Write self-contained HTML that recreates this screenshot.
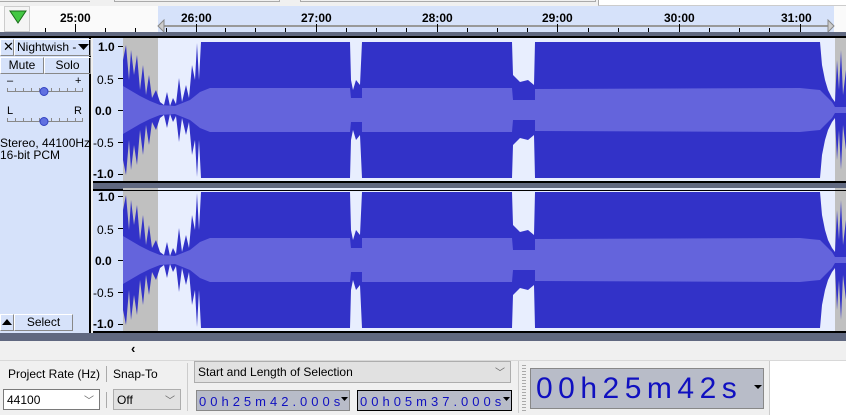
<!DOCTYPE html>
<html><head><meta charset="utf-8"><style>
*{margin:0;padding:0;box-sizing:border-box}
body{width:846px;height:415px;overflow:hidden;background:#f0f0f0;font-family:"Liberation Sans",Arial,sans-serif;font-size:12px;position:relative}
.a{position:absolute}
.lbl{position:absolute;font-size:12px;color:#000;white-space:nowrap}
.tb{position:absolute;height:21px;border:1px solid #7a7a7a;font-size:12px;padding:3px 0 0 3px}
.dig{position:absolute;height:21px;border:1px solid #888;background:#b8bcc8;font-family:"Liberation Sans",sans-serif;font-size:13px;color:#1010c0;letter-spacing:4px;padding:3px 0 0 2px;white-space:nowrap}
</style></head><body>
<div class="a" style="left:0;top:0;width:846px;height:7px;background:#f0f0f0"></div>
<div class="a" style="left:0;top:0;width:90px;height:2px;border-bottom:1px solid #aaa"></div>
<div class="a" style="left:114px;top:0;width:166px;height:2px;border:1px solid #aaa;border-top:0"></div>
<div class="a" style="left:300px;top:0;width:296px;height:2px;border:1px solid #aaa;border-top:0"></div>
<div class="a" style="left:598px;top:0;width:248px;height:6px;background:#fff;border-left:1px solid #aaa;border-bottom:1px solid #ccc"></div>
<div class="a" style="left:0;top:6px;width:158px;height:26px;background:#fafafa"></div>
<div class="a" style="left:4px;top:6px;width:26px;height:26px;border:1px solid #ccc;background:#f4f4f4"></div>
<svg class="a" style="left:9px;top:10px" width="18" height="14"><polygon points="1,1 17,1 9,13" fill="#44c844" stroke="#1a6a1a" stroke-width="1"/></svg>
<div class="a" style="left:158px;top:6px;width:676px;height:26px;background:#d6e2fa"></div>
<div class="a" style="left:834px;top:6px;width:12px;height:26px;background:#fafafa"></div>
<div class="a" style="left:163px;top:25px;width:668px;height:2px;background:#999"></div>
<svg class="a" style="left:157px;top:19px" width="680" height="14"><polygon points="1,7 7,1 7,13" fill="#ccc" stroke="#888"/><polygon points="677,7 671,1 671,13" fill="#ccc" stroke="#888"/></svg>
<svg class="a" style="left:0;top:24px" width="846" height="9">
<g stroke="#000" stroke-width="1">
<path d="M45.5 4v5M75.5 4v5M105.5 4v5M135.5 4v5M166.5 4v5M225.5 4v5M255.5 4v5M285.5 4v5M346.5 4v5M376.5 4v5M406.5 4v5M467.5 4v5M497.5 4v5M527.5 4v5M588.5 4v5M618.5 4v5M648.5 4v5M709.5 4v5M739.5 4v5M769.5 4v5"/>
<path d="M75.5 0v9M196.5 0v9M316.5 0v9M437.5 0v9M557.5 0v9M679.5 0v9M800.5 0v9"/></g></svg>
<div class="lbl" style="left:60px;top:11px;font-weight:bold">25:00</div>
<div class="lbl" style="left:181px;top:11px;font-weight:bold">26:00</div>
<div class="lbl" style="left:301px;top:11px;font-weight:bold">27:00</div>
<div class="lbl" style="left:422px;top:11px;font-weight:bold">28:00</div>
<div class="lbl" style="left:542px;top:11px;font-weight:bold">29:00</div>
<div class="lbl" style="left:664px;top:11px;font-weight:bold">30:00</div>
<div class="lbl" style="left:781px;top:11px;font-weight:bold">31:00</div>
<div class="a" style="left:0;top:32px;width:846px;height:4px;background:#606880"></div>
<div class="a" style="left:0;top:36px;width:846px;height:2px;background:#000"></div>
<div class="a" style="left:0;top:38px;width:91px;height:295px;background:#d6e2fa;border-right:2px solid #000"></div>
<div class="a" style="left:0;top:39px;width:14px;height:17px;border:1px solid #fff;border-right-color:#888;border-bottom-color:#888;font-size:13px;padding-left:2px;line-height:14px">✕</div>
<div class="a" style="left:14px;top:39px;width:77px;height:17px;border:1px solid #fff;border-right-color:#888;border-bottom-color:#888;font-size:12px;padding-left:2px;line-height:15px">Nightwish -</div>
<svg class="a" style="left:78px;top:44px" width="11" height="7"><polygon points="0,0 11,0 5.5,6" fill="#000"/></svg>
<div class="a" style="left:0;top:57px;width:44px;height:17px;border:1px solid #fff;border-right-color:#888;border-bottom-color:#888;text-align:center;line-height:15px">Mute</div>
<div class="a" style="left:44px;top:57px;width:47px;height:17px;border:1px solid #fff;border-right-color:#888;border-bottom-color:#888;text-align:center;line-height:15px">Solo</div>
<div class="lbl" style="left:7px;top:75px;font-size:11px">–</div>
<div class="lbl" style="left:75px;top:75px;font-size:11px">+</div>
<div class="lbl" style="left:7px;top:105px;font-size:11px">L</div>
<div class="lbl" style="left:74px;top:105px;font-size:11px">R</div>
<svg class="a" style="left:6px;top:85px" width="78" height="44">
<g stroke="#888"><path d="M1 6.5h76M1 36.5h76"/><path d="M1.5 3v3M9.5 3v3M17.5 3v3M25.5 3v3M33.5 3v3M45.5 3v3M53.5 3v3M61.5 3v3M69.5 3v3M76.5 3v3M1.5 33v3M9.5 33v3M17.5 33v3M25.5 33v3M33.5 33v3M45.5 33v3M53.5 33v3M61.5 33v3M69.5 33v3M76.5 33v3"/></g>
<circle cx="38" cy="6.5" r="4" fill="#6070e0" stroke="#3040c0"/><circle cx="38" cy="36.5" r="4" fill="#6070e0" stroke="#3040c0"/></svg>
<div class="lbl" style="left:0;top:137px;line-height:12px">Stereo, 44100Hz<br>16-bit PCM</div>
<div class="a" style="left:0;top:314px;width:14px;height:17px;border:1px solid #fff;border-right-color:#888;border-bottom-color:#888"></div>
<svg class="a" style="left:2px;top:319px" width="10" height="7"><polygon points="0,6 10,6 5,0" fill="#000"/></svg>
<div class="a" style="left:14px;top:314px;width:59px;height:17px;border:1px solid #fff;border-right-color:#888;border-bottom-color:#888;text-align:center;line-height:15px">Select</div>
<div class="a" style="left:93px;top:38px;width:30px;height:295px;background:#d6e2fa"></div>
<div class="a" style="left:93px;top:182px;width:753px;height:8px;background:#606880;border-top:1px solid #000;border-bottom:1px solid #000"></div>
<svg class="a" style="left:93px;top:38px" width="30" height="295" font-family="Liberation Sans" font-size="12" font-weight="bold">
<g stroke="#000"><path d="M25 8.5h5M25 40.5h5M25 72.5h5M25 104.5h5M25 136.5h5M25 158.5h5M25 190.5h5M25 222.5h5M25 254.5h5M25 286.5h5"/></g>
<text x="5" y="13">1.0</text><text x="4" y="46" font-weight="normal">0.5</text><text x="2" y="77">0.0</text><text x="0" y="109" font-weight="normal">-0.5</text><text x="0" y="140">-1.0</text>
<text x="5" y="163">1.0</text><text x="4" y="196" font-weight="normal">0.5</text><text x="2" y="227">0.0</text><text x="0" y="259" font-weight="normal">-0.5</text><text x="0" y="290">-1.0</text>
</svg>
<svg class="a" style="left:0;top:0" width="846" height="340">
<defs>
<g id="ch">
<rect x="123" y="-72" width="35" height="144" fill="#c0c0c0"/>
<rect x="158" y="-72" width="677" height="144" fill="#e8eefe"/>
<rect x="835" y="-72" width="11" height="144" fill="#c0c0c0"/>
<polygon fill="#3232c8" points="123,-50 126,-65 129,-30 131,-60 134,-35 137,-55 140,-20 143,-45 146,-15 149,-35 152,-12 156,-20 160,-8 164,-5 167,-18 170,-4 173,-12 176,-6 179,-32 182,-8 186,-25 189,-12 192,-45 195,-30 197,-67 199,-30 201,-68 350,-68 351,-30 353,-20 356,-30 360,-25 362,-68 512,-68 513,-35 520,-28 528,-30 534,-25 535,-68 820,-68 822,-45 825,-30 828,-20 832,-12 835,-8 837,-50 839,-20 841,-60 843,-15 846,-40 846,40 843,15 841,60 839,20 837,50 835,8 832,12 828,20 825,30 822,45 820,68 535,68 534,25 528,30 520,28 513,35 512,68 362,68 360,25 356,30 353,20 351,30 350,68 201,68 199,30 197,67 195,30 192,45 189,12 186,25 182,8 179,32 176,6 173,12 170,4 167,18 164,5 160,8 156,20 152,12 149,35 146,15 143,45 140,20 137,55 134,35 131,60 129,30 126,65 123,50"/>
<polygon fill="#6464dc" points="123,-24 140,-14 150,-9 160,-5 175,-4 190,-10 200,-18 210,-22 350,-22 351,-12 362,-12 362,-22 512,-22 513,-10 535,-10 535,-21 800,-22 820,-20 826,-14 832,-8 835,-3 846,-3 846,3 835,3 832,8 826,14 820,20 800,22 535,21 535,10 513,10 512,22 362,22 362,12 351,12 350,22 210,22 200,18 190,10 175,4 160,5 150,9 140,14 123,24"/>
</g>
</defs>
<use href="#ch" transform="translate(0,110)"/>
<use href="#ch" transform="translate(0,260)"/>
<rect x="123" y="36" width="723" height="2" fill="#000"/>
<rect x="93" y="181" width="753" height="1" fill="#000"/>
<rect x="93" y="190" width="753" height="1" fill="#000"/>
<rect x="93" y="331" width="753" height="2" fill="#000"/>
</svg>
<div class="a" style="left:0;top:333px;width:846px;height:8px;background:#606880"></div>
<div class="a" style="left:0;top:341px;width:846px;height:17px;background:#f0f0f0"></div>
<div class="lbl" style="left:131px;top:341px;font-weight:bold;font-size:13px">‹</div>
<div class="a" style="left:0;top:360px;width:846px;height:1px;background:#d8d8d8"></div>
<div class="lbl" style="left:8px;top:367px">Project Rate (Hz)</div>
<div class="a" style="left:106px;top:366px;width:1px;height:16px;background:#aaa"></div>
<div class="lbl" style="left:113px;top:367px">Snap-To</div>
<div class="a" style="left:187px;top:363px;width:1px;height:48px;background:#ccc"></div>
<div class="a" style="left:194px;top:361px;width:317px;height:22px;background:#e1e1e1;border:1px solid #adadad;padding:3px 0 0 3px">Start and Length of Selection</div>
<div class="lbl" style="left:495px;top:364px;color:#666;font-size:10px">﹀</div>
<div class="tb" style="left:3px;top:389px;width:97px;background:#fff">44100</div>
<div class="lbl" style="left:84px;top:392px;color:#666;font-size:10px">﹀</div>
<div class="a" style="left:106px;top:392px;width:1px;height:16px;background:#aaa"></div>
<div class="tb" style="left:113px;top:389px;width:68px;background:#e1e1e1;border-color:#adadad">Off</div>
<div class="lbl" style="left:165px;top:392px;color:#666;font-size:10px">﹀</div>
<div class="dig" style="left:196px;top:390px;width:154px">00h25m42.000s</div>
<svg class="a" style="left:341px;top:397px" width="7" height="5"><polygon points="0,0 7,0 3.5,4" fill="#000"/></svg>
<div class="dig" style="left:357px;top:390px;width:155px;border:1px solid #000">00h05m37.000s</div>
<svg class="a" style="left:503px;top:397px" width="7" height="5"><polygon points="0,0 7,0 3.5,4" fill="#000"/></svg>
<div class="a" style="left:518px;top:361px;width:1px;height:52px;background:#ccc"></div>
<div class="a" style="left:522px;top:365px;width:4px;height:48px;background:repeating-linear-gradient(#aaa 0 1px,transparent 1px 3px)"></div>
<div class="a" style="left:530px;top:368px;width:234px;height:41px;border:1px solid #888;background:#b8bcc8;font-size:30px;color:#1010c0;letter-spacing:5.5px;padding:3px 0 0 5px;white-space:nowrap;line-height:34px">00h25m42s</div>
<svg class="a" style="left:754px;top:385px" width="8" height="5"><polygon points="0,0 8,0 4,4" fill="#000"/></svg>
<div class="a" style="left:769px;top:361px;width:1px;height:54px;background:#ccc"></div>
<div class="a" style="left:770px;top:361px;width:76px;height:54px;background:#fff"></div>
</body></html>
